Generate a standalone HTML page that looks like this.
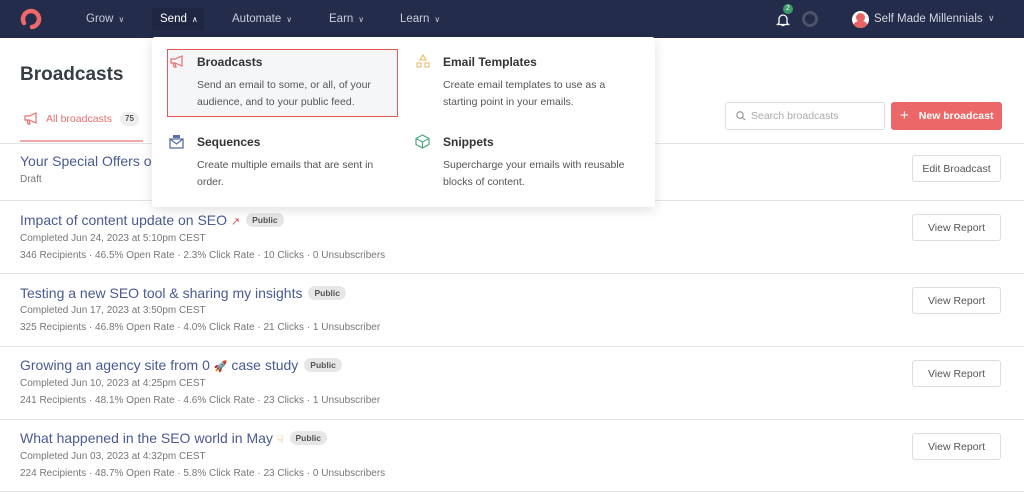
<!DOCTYPE html>
<html><head><meta charset="utf-8"><style>
*{box-sizing:border-box;margin:0;padding:0}
body{width:1024px;height:496px;overflow:hidden;background:#fff;font-family:"Liberation Sans",sans-serif;color:#373f45;position:relative}
.nav{position:absolute;left:0;top:0;width:1024px;height:38px;background:#232c4b}
.nav span.i{position:absolute;top:13px;font-size:11.5px;color:#c9cdd8}
.chev{font-size:8px;margin-left:5px}
.abs{position:absolute}
h1{position:absolute;left:20px;top:64px;font-size:19px;font-weight:bold;color:#373f45}
.row{position:absolute;left:0;width:1024px;border-top:1px solid #e3e3e3}
.t{position:absolute;left:20px;font-size:14px;color:#4a5a92}
.s{position:absolute;left:20px;font-size:10px;color:#777}
.pub{display:inline-block;background:#e6e6e6;color:#555;font-size:8.5px;font-weight:bold;border-radius:8px;padding:2px 6px;margin-left:6px;vertical-align:2px}
.btn{position:absolute;left:912px;width:89px;height:27px;border:1px solid #ddd;border-radius:3px;font-size:10.5px;color:#555;text-align:center;line-height:27px;background:#fff}
.dd{position:absolute;left:152px;top:37px;width:503px;height:170px;background:#fff;border-radius:3px;box-shadow:0 3px 12px rgba(0,0,0,.12)}
.dt{position:absolute;font-size:12px;font-weight:bold;color:#333}
.dx{position:absolute;font-size:10.5px;color:#555;line-height:17px}
</style></head><body>
<div class="nav">
<svg class="abs" style="left:19px;top:8px" width="24" height="22" viewBox="0 0 24 22"><path d="M5 15 A8 8 0 1 1 13 19" fill="none" stroke="#ee6a6a" stroke-width="4.5" stroke-linecap="round"/></svg>
<span class="i" style="left:86px">Grow<span class="chev">&#8744;</span></span>
<div class="abs" style="left:152px;top:8px;width:52px;height:22px;background:#1e2643"></div>
<span class="i" style="left:160px;color:#fff">Send<span class="chev">&#8743;</span></span>
<span class="i" style="left:232px">Automate<span class="chev">&#8744;</span></span>
<span class="i" style="left:329px">Earn<span class="chev">&#8744;</span></span>
<span class="i" style="left:400px">Learn<span class="chev">&#8744;</span></span>
<svg class="abs" style="left:776px;top:12px" width="14" height="15" viewBox="0 0 14 15"><path d="M3 11V7a4 4 0 0 1 8 0v4l1.5 1.5h-11z M5.5 13.5h3" fill="none" stroke="#fff" stroke-width="1.3"/></svg>
<div class="abs" style="left:783px;top:4px;width:10px;height:10px;border-radius:5px;background:#3d9a6a;color:#fff;font-size:7px;text-align:center;line-height:10px">2</div>
<div class="abs" style="left:802px;top:11px;width:16px;height:16px;border-radius:8px;border:3px solid #4a5368"></div>
<div class="abs" style="left:852px;top:11px;width:17px;height:17px;border-radius:9px;background:#fff;overflow:hidden"><div style="position:absolute;left:4px;top:2px;width:9px;height:9px;border-radius:5px;background:#e86363"></div><div style="position:absolute;left:1px;top:10px;width:15px;height:12px;border-radius:7px;background:#e86363"></div></div>
<span class="i" style="left:874px;color:#d5d8e0">Self Made Millennials</span>
<span class="i" style="left:988px;font-size:9px">&#8744;</span>
</div>
<h1>Broadcasts</h1>
<svg class="abs" style="left:24px;top:112px" width="15" height="13" viewBox="0 0 15 13"><path d="M1 4h4l7-3v10l-7-3H1z M3 8l1 4h2l-1-4" fill="none" stroke="#e86f6f" stroke-width="1.2"/></svg>
<div class="abs" style="left:46px;top:113px;font-size:10.5px;color:#e86f6f">All broadcasts</div>
<div class="abs" style="left:120px;top:112px;width:19px;height:14px;border-radius:7px;background:#eee;font-size:8px;font-weight:bold;color:#555;text-align:center;line-height:14px">75</div>
<div class="abs" style="left:20px;top:140px;width:123px;height:2px;background:#f0a8a8"></div>
<div class="abs" style="left:725px;top:102px;width:160px;height:28px;border:1px solid #ddd;border-radius:3px"></div>
<svg class="abs" style="left:736px;top:111px" width="10" height="10" viewBox="0 0 10 10"><circle cx="4" cy="4" r="3.2" fill="none" stroke="#888" stroke-width="1"/><path d="M6.5 6.5L9 9" stroke="#888"/></svg>
<div class="abs" style="left:751px;top:110px;font-size:10.5px;color:#aaa">Search broadcasts</div>
<div class="abs" style="left:891px;top:102px;width:111px;height:28px;background:#ec6767;border-radius:3px;color:#fff;font-size:10.5px;font-weight:bold;line-height:28px"><span style="margin-left:9px;font-size:15px;font-weight:normal;vertical-align:-1px">+</span><span style="margin-left:10px">New broadcast</span></div>
<div class="row" style="top:143px"></div>
<div class="t" style="top:153px">Your Special Offers on</div><div class="s" style="top:174px">Draft</div>
<div class="btn" style="top:155px">Edit Broadcast</div>
<div class="row" style="top:200px"></div>
<div class="t" style="top:212px">Impact of content update on SEO <span style="color:#d55;font-size:11px">&#8599;</span><span class="pub">Public</span></div>
<div class="s" style="top:233px">Completed Jun 24, 2023 at 5:10pm CEST</div>
<div class="s" style="top:250px">346 Recipients · 46.5% Open Rate · 2.3% Click Rate · 10 Clicks · 0 Unsubscribers</div>
<div class="btn" style="top:214px">View Report</div>
<div class="row" style="top:273px"></div>
<div class="t" style="top:285px">Testing a new SEO tool &amp; sharing my insights<span class="pub">Public</span></div>
<div class="s" style="top:305px">Completed Jun 17, 2023 at 3:50pm CEST</div>
<div class="s" style="top:322px">325 Recipients · 46.8% Open Rate · 4.0% Click Rate · 21 Clicks · 1 Unsubscriber</div>
<div class="btn" style="top:287px">View Report</div>
<div class="row" style="top:346px"></div>
<div class="t" style="top:357px">Growing an agency site from 0 <span style="font-size:11px">🚀</span> case study<span class="pub">Public</span></div>
<div class="s" style="top:378px">Completed Jun 10, 2023 at 4:25pm CEST</div>
<div class="s" style="top:395px">241 Recipients · 48.1% Open Rate · 4.6% Click Rate · 23 Clicks · 1 Unsubscriber</div>
<div class="btn" style="top:360px">View Report</div>
<div class="row" style="top:419px"></div>
<div class="t" style="top:430px">What happened in the SEO world in May <span style="font-size:11px;color:#e9a93a">&#9759;</span><span class="pub">Public</span></div>
<div class="s" style="top:451px">Completed Jun 03, 2023 at 4:32pm CEST</div>
<div class="s" style="top:468px">224 Recipients · 48.7% Open Rate · 5.8% Click Rate · 23 Clicks · 0 Unsubscribers</div>
<div class="btn" style="top:433px">View Report</div>
<div class="row" style="top:491px"></div>
<div class="dd">
<div class="abs" style="left:15px;top:12px;width:231px;height:68px;background:#f4f6f8;border:1.5px solid #e4584f"></div>
<svg class="abs" style="left:18px;top:18px" width="15" height="13" viewBox="0 0 15 13"><path d="M1 4h4l7-3v10l-7-3H1z M3 8l1 4h2l-1-4" fill="none" stroke="#e86f6f" stroke-width="1.2"/></svg>
<div class="dt" style="left:45px;top:18px">Broadcasts</div>
<div class="dx" style="left:45px;top:40px">Send an email to some, or all, of your<br>audience, and to your public feed.</div>
<svg class="abs" style="left:264px;top:17px" width="14" height="14" viewBox="0 0 14 14"><path d="M7 1L10 6H4z" fill="none" stroke="#e8b460"/><rect x="1" y="9" width="4" height="4" fill="none" stroke="#e8b460"/><rect x="9" y="9" width="4" height="4" fill="none" stroke="#e8b460"/></svg>
<div class="dt" style="left:291px;top:18px">Email Templates</div>
<div class="dx" style="left:291px;top:40px">Create email templates to use as a<br>starting point in your emails.</div>
<svg class="abs" style="left:17px;top:97px" width="15" height="15" viewBox="0 0 15 15"><rect x="4" y="1" width="7" height="3" fill="#5a6ea8"/><rect x="1" y="5" width="13" height="9" fill="none" stroke="#5a6ea8" stroke-width="1.3"/><path d="M1 5l6.5 5 6.5-5" fill="none" stroke="#5a6ea8" stroke-width="1.2"/></svg>
<div class="dt" style="left:45px;top:98px">Sequences</div>
<div class="dx" style="left:45px;top:120px">Create multiple emails that are sent in<br>order.</div>
<svg class="abs" style="left:263px;top:97px" width="15" height="15" viewBox="0 0 15 15"><path d="M7.5 1L14 4.5v6L7.5 14 1 10.5v-6z M1 4.5l6.5 3.5 6.5-3.5 M7.5 8v6" fill="none" stroke="#4aa77e" stroke-width="1.2"/></svg>
<div class="dt" style="left:291px;top:98px">Snippets</div>
<div class="dx" style="left:291px;top:120px">Supercharge your emails with reusable<br>blocks of content.</div>
</div>
</body></html>
